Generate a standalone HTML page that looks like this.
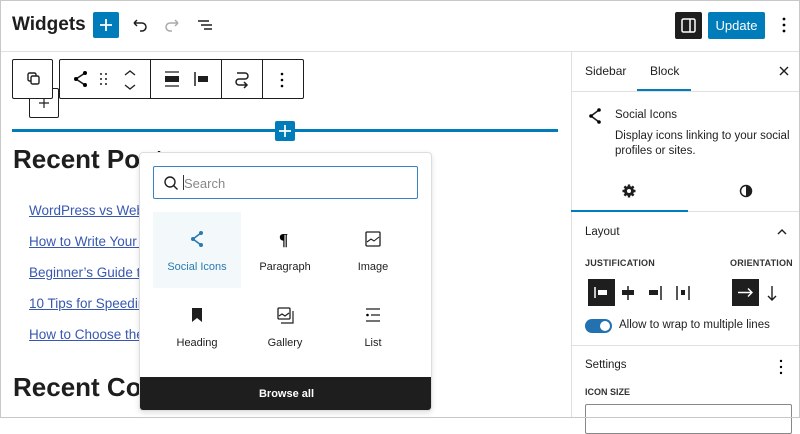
<!DOCTYPE html>
<html><head><style>
*{box-sizing:border-box;margin:0;padding:0}
body{width:800px;height:418px;overflow:hidden;font-family:"Liberation Sans",Arial,sans-serif;color:#1e1e1e;background:#fff;position:relative}
.a{position:absolute}
.frame{position:absolute;left:0;top:0;width:800px;height:418px;border:1px solid #c8c8c8;pointer-events:none;z-index:50}
svg{display:block}
.lnk{position:absolute;left:29px;font-size:13.5px;color:#3858b0;text-decoration:underline;white-space:nowrap}
.cell{position:absolute;width:88px;height:76px;text-align:center;font-size:11px}
.cell svg{margin:17px auto 12px}
</style></head><body>
<div class="frame"></div>
<!-- header -->
<div class="a" style="left:0;top:0;width:800px;height:52px;border-bottom:1px solid #e0e0e0"></div>
<div class="a" style="left:12px;top:14px;font-size:19px;font-weight:bold">Widgets</div>
<div class="a" style="left:93px;top:12px;width:26px;height:26px;background:#007cba;border-radius:2px"><svg width="26" height="26"><path d="M13 7v12M7 13h12" stroke="#fff" stroke-width="1.8"/></svg></div>
<svg class="a" style="left:128px;top:14px" width="22" height="22"><path d="M6 9h8a4 4 0 0 1 0 8h-2M6 9l3-3M6 9l3 3" stroke="#1e1e1e" stroke-width="1.5" fill="none"/></svg>
<svg class="a" style="left:162px;top:14px" width="22" height="22"><path d="M16 9H8a4 4 0 0 0 0 8h2M16 9l-3-3M16 9l-3 3" stroke="#aaa" stroke-width="1.5" fill="none"/></svg>
<svg class="a" style="left:195px;top:14px" width="22" height="22"><path d="M3 7h11M6 11h11M9 15h8" stroke="#1e1e1e" stroke-width="1.5"/></svg>
<div class="a" style="left:675px;top:12px;width:27px;height:27px;background:#1e1e1e;border-radius:2px"><svg width="27" height="27"><rect x="7" y="7" width="13" height="13" rx="1.5" stroke="#fff" stroke-width="1.5" fill="none"/><path d="M15 7v13" stroke="#fff" stroke-width="1.5"/></svg></div>
<div class="a" style="left:708px;top:12px;width:57px;height:27px;background:#007cba;border-radius:2px;color:#fff;font-size:13px;line-height:27px;text-align:center">Update</div>
<svg class="a" style="left:776px;top:14px" width="16" height="22"><circle cx="8" cy="5" r="1.4"/><circle cx="8" cy="11" r="1.4"/><circle cx="8" cy="17" r="1.4"/></svg>

<!-- toolbar -->
<div class="a" style="left:29px;top:88px;width:30px;height:30px;border:1px solid #1e1e1e;border-radius:2px;background:#fff"><svg width="28" height="28"><path d="M14 9v10M9 14h10" stroke="#1e1e1e" stroke-width="1.2"/></svg></div>
<div class="a" style="left:12px;top:59px;width:41px;height:40px;border:1px solid #1e1e1e;border-radius:2px;background:#fff"><svg width="39" height="38"><rect x="15" y="13" width="8" height="8" rx="1.5" stroke="#1e1e1e" stroke-width="1.4" fill="none"/><rect x="18" y="16" width="8" height="8" rx="1.5" stroke="#1e1e1e" stroke-width="1.4" fill="#fff"/></svg></div>
<div class="a" style="left:59px;top:59px;width:245px;height:40px;border:1px solid #1e1e1e;border-radius:2px;background:#fff"></div>
<div class="a" style="left:150px;top:59px;width:1px;height:40px;background:#1e1e1e"></div>
<div class="a" style="left:221px;top:59px;width:1px;height:40px;background:#1e1e1e"></div>
<div class="a" style="left:262px;top:59px;width:1px;height:40px;background:#1e1e1e"></div>
<svg class="a" style="left:70px;top:68px" width="20" height="22"><path d="M15 5L6 11l9 6" stroke="#1e1e1e" stroke-width="1.6" fill="none"/><circle cx="15" cy="5" r="2"/><circle cx="6" cy="11" r="2"/><circle cx="15" cy="17" r="2"/></svg>
<svg class="a" style="left:98px;top:71px" width="12" height="16" fill="#1e1e1e"><circle cx="3" cy="3" r="1"/><circle cx="8" cy="3" r="1"/><circle cx="3" cy="8" r="1"/><circle cx="8" cy="8" r="1"/><circle cx="3" cy="13" r="1"/><circle cx="8" cy="13" r="1"/></svg>
<svg class="a" style="left:122px;top:68px" width="16" height="24"><path d="M3 7l5-4 5 4M3 17l5 4 5-4" stroke="#1e1e1e" stroke-width="1.3" fill="none"/></svg>
<svg class="a" style="left:162px;top:70px" width="20" height="18"><path d="M3 2h14M3 16h14" stroke="#1e1e1e" stroke-width="1.3"/><rect x="3" y="6" width="14" height="6" fill="#1e1e1e"/></svg>
<svg class="a" style="left:192px;top:70px" width="20" height="18"><path d="M3 2v14" stroke="#1e1e1e" stroke-width="1.5"/><rect x="6" y="6" width="10" height="6" fill="#1e1e1e"/></svg>
<svg class="a" style="left:231px;top:68px" width="22" height="22"><path d="M9 5h5a3 3 0 0 1 0 6H8a3 3 0 0 0 0 6h7M13 14l3 3-3 3" stroke="#1e1e1e" stroke-width="1.5" fill="none"/><path d="M6 5h3" stroke="#1e1e1e" stroke-width="1.5"/></svg>
<svg class="a" style="left:274px;top:69px" width="16" height="22"><circle cx="8" cy="5" r="1.3"/><circle cx="8" cy="11" r="1.3"/><circle cx="8" cy="17" r="1.3"/></svg>

<!-- inserter line -->
<div class="a" style="left:12px;top:129px;width:546px;height:3px;background:#007cba"></div>
<div class="a" style="left:275px;top:121px;width:20px;height:20px;background:#007cba;border-radius:2px"><svg width="20" height="20"><path d="M10 4v12M4 10h12" stroke="#fff" stroke-width="1.7"/></svg></div>

<!-- content -->
<div class="a" style="left:13px;top:144px;font-size:26px;font-weight:bold">Recent Posts</div>
<div class="lnk" style="top:203px">WordPress vs Website Builder</div>
<div class="lnk" style="top:234px">How to Write Your First Post</div>
<div class="lnk" style="top:265px">Beginner’s Guide to WordPress</div>
<div class="lnk" style="top:296px">10 Tips for Speeding Up WordPress</div>
<div class="lnk" style="top:327px">How to Choose the Best Theme</div>
<div class="a" style="left:13px;top:372px;font-size:26px;font-weight:bold">Recent Comments</div>

<!-- popover -->
<div class="a" style="left:139px;top:152px;width:293px;height:259px;background:#fff;border:1px solid #ddd;border-radius:4px;box-shadow:0 2px 6px rgba(0,0,0,.12);overflow:hidden">
  <div class="a" style="left:13px;top:13px;width:265px;height:33px;border:1.5px solid #3582c4;border-radius:2px"></div>
  <svg class="a" style="left:22px;top:21px" width="18" height="18"><circle cx="8" cy="8" r="5" stroke="#1e1e1e" stroke-width="1.4" fill="none"/><path d="M11.5 11.5l4 4" stroke="#1e1e1e" stroke-width="1.4"/></svg>
  <div class="a" style="left:43px;top:22px;width:1px;height:15px;background:#333"></div>
  <div class="a" style="left:44px;top:23px;font-size:13px;color:#888">Search</div>
  <div class="cell" style="left:13px;top:59px;background:#f3f8fb;color:#2a7ab0"><svg width="20" height="20"><path d="M14 4L6 10l8 6" stroke="#2a7ab0" stroke-width="1.6" fill="none"/><circle cx="14" cy="4" r="2" fill="#2a7ab0"/><circle cx="6" cy="10" r="2" fill="#2a7ab0"/><circle cx="14" cy="16" r="2" fill="#2a7ab0"/></svg>Social Icons</div>
  <div class="cell" style="left:101px;top:59px"><svg width="20" height="20"><text x="4" y="16" font-size="17" font-weight="bold" font-family="Liberation Serif">¶</text></svg>Paragraph</div>
  <div class="cell" style="left:189px;top:59px"><svg width="20" height="20"><rect x="3" y="3" width="14" height="14" rx="1" stroke="#1e1e1e" stroke-width="1.3" fill="none"/><path d="M4 13l4-3 3 2 5-4" stroke="#1e1e1e" stroke-width="1.1" fill="none"/></svg>Image</div>
  <div class="cell" style="left:13px;top:135px"><svg width="20" height="20"><path d="M5 3h10v14l-5-4-5 4z" fill="#1e1e1e"/></svg>Heading</div>
  <div class="cell" style="left:101px;top:135px"><svg width="20" height="20"><rect x="3" y="3" width="12" height="11" rx="1" stroke="#1e1e1e" stroke-width="1.3" fill="none"/><path d="M4 11l3-2 3 2 4-3M18 6v12H6" stroke="#1e1e1e" stroke-width="1.2" fill="none"/></svg>Gallery</div>
  <div class="cell" style="left:189px;top:135px"><svg width="20" height="20"><path d="M3 4h14M8 10h9M3 16h14" stroke="#1e1e1e" stroke-width="1.3"/><circle cx="4.5" cy="10" r="1.3"/></svg>List</div>
  <div class="a" style="left:0;top:224px;width:293px;height:35px;background:#1e1e1e;color:#fff;font-size:11px;font-weight:bold;text-align:center;line-height:34px">Browse all</div>
</div>

<!-- sidebar -->
<div class="a" style="left:571px;top:52px;width:229px;height:366px;border-left:1px solid #e0e0e0;background:#fff"></div>
<div class="a" style="left:571px;top:91px;width:229px;height:1px;background:#e0e0e0"></div>
<div class="a" style="left:585px;top:64px;font-size:12px">Sidebar</div>
<div class="a" style="left:650px;top:64px;font-size:12px">Block</div>
<div class="a" style="left:637px;top:89px;width:54px;height:2px;background:#007cba"></div>
<svg class="a" style="left:777px;top:64px" width="14" height="14"><path d="M3 3l8 8M11 3l-8 8" stroke="#1e1e1e" stroke-width="1.4"/></svg>
<svg class="a" style="left:585px;top:106px" width="20" height="20"><path d="M14 4L6 10l8 6" stroke="#1e1e1e" stroke-width="1.6" fill="none"/><circle cx="14" cy="4" r="1.8"/><circle cx="6" cy="10" r="1.8"/><circle cx="14" cy="16" r="1.8"/></svg>
<div class="a" style="left:615px;top:109px;font-size:11.5px">Social Icons</div>
<div class="a" style="left:615px;top:129px;font-size:11.5px;line-height:15px;width:180px">Display icons linking to your social profiles or sites.</div>
<svg class="a" style="left:621px;top:183px" width="16" height="16"><circle cx="8" cy="8" r="5" fill="#1e1e1e"/><path d="M8 1.5v13M1.5 8h13M3.4 3.4l9.2 9.2M12.6 3.4l-9.2 9.2" stroke="#1e1e1e" stroke-width="2.4"/><circle cx="8" cy="8" r="2" fill="#fff"/></svg>
<svg class="a" style="left:738px;top:183px" width="16" height="16"><circle cx="8" cy="8" r="5.5" fill="none" stroke="#1e1e1e" stroke-width="1.5"/><path d="M8 2.5a5.5 5.5 0 0 1 0 11z" fill="#1e1e1e"/></svg>
<div class="a" style="left:571px;top:211px;width:229px;height:1px;background:#e0e0e0"></div>
<div class="a" style="left:571px;top:210px;width:117px;height:2px;background:#007cba"></div>
<div class="a" style="left:585px;top:226px;font-size:11.5px">Layout</div>
<svg class="a" style="left:775px;top:226px" width="14" height="12"><path d="M3 8l4-4 4 4" stroke="#1e1e1e" stroke-width="1.4" fill="none"/></svg>
<div class="a" style="left:585px;top:258px;font-size:9px;font-weight:bold;color:#333;letter-spacing:.2px">JUSTIFICATION</div>
<div class="a" style="left:730px;top:258px;font-size:9px;font-weight:bold;color:#333;letter-spacing:.2px">ORIENTATION</div>
<div class="a" style="left:588px;top:279px;width:27px;height:27px;background:#1e1e1e"><svg width="27" height="27"><path d="M7 8v11" stroke="#fff" stroke-width="1.5"/><rect x="10" y="11" width="9" height="5" fill="#fff"/></svg></div>
<svg class="a" style="left:619px;top:283px" width="18" height="20"><path d="M9 3v14" stroke="#1e1e1e" stroke-width="1.5"/><rect x="3" y="7" width="12" height="5" fill="#1e1e1e"/></svg>
<svg class="a" style="left:646px;top:283px" width="18" height="20"><path d="M15 3v14" stroke="#1e1e1e" stroke-width="1.5"/><rect x="3" y="7" width="9" height="5" fill="#1e1e1e"/></svg>
<svg class="a" style="left:674px;top:283px" width="18" height="20"><path d="M3 3v14M15 3v14" stroke="#1e1e1e" stroke-width="1.5"/><rect x="7" y="7" width="4" height="5" fill="#1e1e1e"/></svg>
<div class="a" style="left:732px;top:279px;width:27px;height:27px;background:#1e1e1e"><svg width="27" height="27"><path d="M6 13.5h14M16 9.5l4 4-4 4" stroke="#fff" stroke-width="1.4" fill="none"/></svg></div>
<svg class="a" style="left:764px;top:283px" width="16" height="20"><path d="M8 3v14M4 13l4 4 4-4" stroke="#1e1e1e" stroke-width="1.4" fill="none"/></svg>
<div class="a" style="left:585px;top:319px;width:27px;height:14px;border-radius:7px;background:#2271b1"><div class="a" style="left:15px;top:2px;width:10px;height:10px;border-radius:5px;background:#fff"></div></div>
<div class="a" style="left:619px;top:319px;font-size:11.5px">Allow to wrap to multiple lines</div>
<div class="a" style="left:571px;top:345px;width:229px;height:1px;background:#e0e0e0"></div>
<div class="a" style="left:585px;top:359px;font-size:11.5px">Settings</div>
<svg class="a" style="left:775px;top:358px" width="12" height="18"><circle cx="6" cy="3" r="1.2"/><circle cx="6" cy="9" r="1.2"/><circle cx="6" cy="15" r="1.2"/></svg>
<div class="a" style="left:585px;top:387px;font-size:9px;font-weight:bold;color:#333">ICON SIZE</div>
<div class="a" style="left:585px;top:404px;width:207px;height:30px;border:1px solid #888;border-radius:2px"></div>
</body></html>
